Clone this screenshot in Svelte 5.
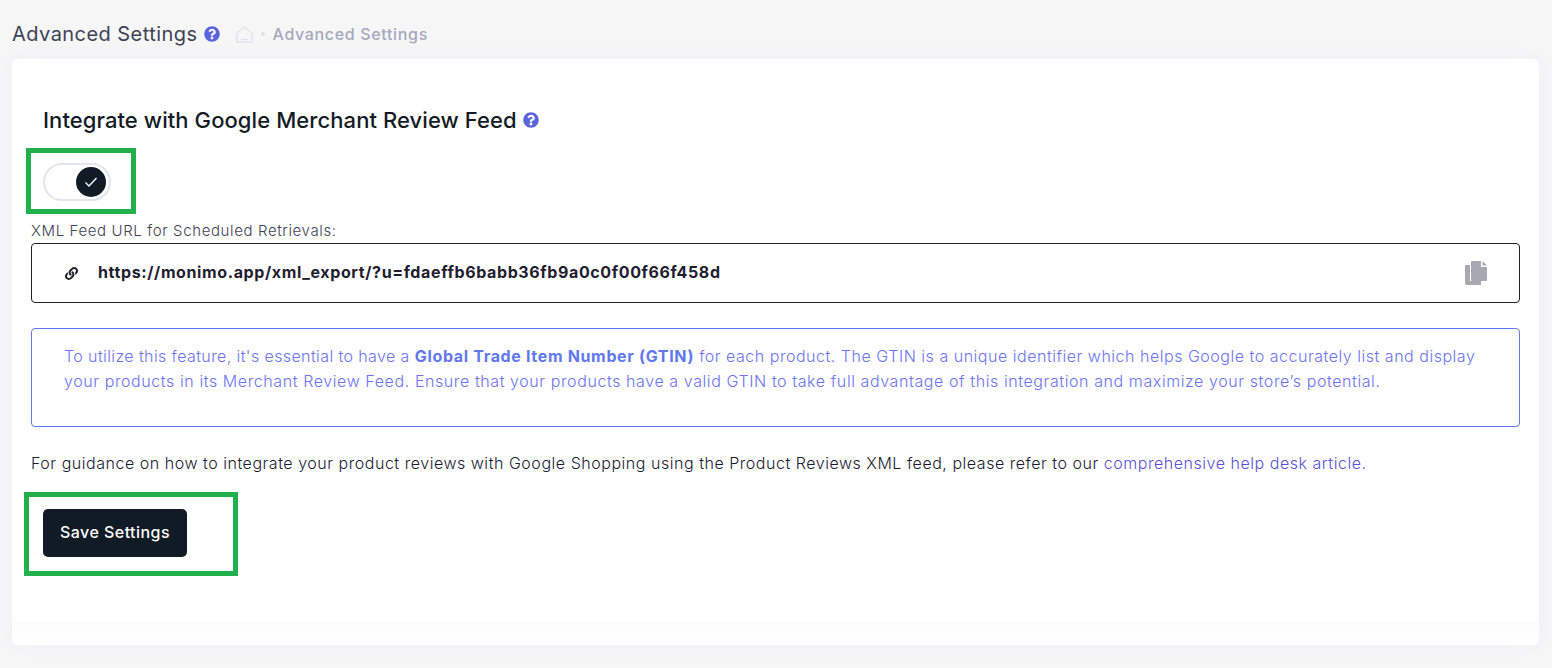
<script>
  const help = 'M504 256c0 136.997-111.043 248-248 248S8 392.997 8 256C8 119.083 119.043 8 256 8s248 111.083 248 248zM262.655 90c-54.497 0-89.255 22.957-116.549 63.758-3.536 5.286-2.353 12.415 2.715 16.258l34.699 26.31c5.205 3.947 12.621 3.008 16.665-2.122 17.864-22.658 30.113-35.797 57.303-35.797 20.429 0 45.698 13.148 45.698 32.958 0 14.976-12.363 22.667-32.534 33.976C247.128 238.528 216 254.941 216 296v4c0 6.627 5.373 12 12 12h56c6.627 0 12-5.373 12-12v-1.333c0-28.462 83.186-29.647 83.186-106.667 0-58.002-60.165-102-116.531-102zM256 338c-25.365 0-46 20.635-46 46 0 25.364 20.635 46 46 46s46-20.636 46-46c0-25.365-20.635-46-46-46z';
  const link = 'M326.612 185.391c59.747 59.809 58.927 155.698.36 214.59-.11.12-.24.25-.36.37l-67.2 67.2c-59.27 59.27-155.699 59.262-214.96 0-59.27-59.26-59.27-155.7 0-214.96l37.106-37.106c9.84-9.84 26.786-3.3 27.294 10.606.648 17.722 3.826 35.527 9.69 52.721 1.986 5.822.567 12.262-3.783 16.612l-13.087 13.087c-28.026 28.026-28.905 73.66-1.155 101.96 28.024 28.579 74.086 28.749 102.325.51l67.2-67.19c28.191-28.191 28.073-73.757 0-101.83-3.701-3.694-7.429-6.564-10.341-8.569a16.037 16.037 0 0 1-6.947-12.606c-.396-10.567 3.348-21.456 11.698-29.806l21.054-21.055c5.521-5.521 14.182-6.199 20.584-1.731a152.482 152.482 0 0 1 20.522 17.197zM467.547 44.449c-59.261-59.262-155.69-59.27-214.96 0l-67.2 67.2c-.12.12-.25.25-.36.37-58.566 58.892-59.387 154.781.36 214.59a152.454 152.454 0 0 0 20.521 17.196c6.402 4.468 15.064 3.789 20.584-1.731l21.054-21.055c8.35-8.35 12.094-19.239 11.698-29.806a16.037 16.037 0 0 0-6.947-12.606c-2.912-2.005-6.64-4.875-10.341-8.569-28.073-28.073-28.191-73.639 0-101.83l67.2-67.19c28.239-28.239 74.3-28.069 102.325.51 27.75 28.3 26.872 73.934-1.155 101.96l-13.087 13.087c-4.35 4.35-5.769 10.79-3.783 16.612 5.864 17.194 9.042 34.999 9.69 52.721.509 13.906 17.454 20.446 27.294 10.606l37.106-37.106c59.271-59.259 59.271-155.699.001-214.959z';
</script>

<div class="page">
  <header class="topbar">
    <h1>Advanced Settings</h1>
    <svg class="help" viewBox="0 0 512 512"><path d={help} /></svg>
    <svg class="home" viewBox="0 0 18 18" fill="none"><path d="M1 7.500 9 1l8 6.500V17H1z" /><path d="M5 14.500h8" /></svg>
    <span class="dot"></span>
    <span class="crumb">Advanced Settings</span>
  </header>

  <main class="card">
    <div class="body">
      <h2>Integrate with Google Merchant Review Feed <svg class="help" viewBox="0 0 512 512"><path d={help} /></svg></h2>

      <div class="mark mark-toggle">
        <div class="toggle">
          <span class="knob">
            <svg viewBox="0 0 14 14" fill="none"><path d="M1.500 7.500 5 11l7.500-8" /></svg>
          </span>
        </div>
      </div>

      <p class="label">XML Feed URL for Scheduled Retrievals:</p>
      <div class="url">
        <svg class="link" viewBox="0 0 512 512"><path d={link} /></svg>
        <span class="url-text">https://monimo.app/xml_export/?u=fdaeffb6babb36fb9a0c0f00f66f458d</span>
        <svg class="copy" viewBox="0 0 22 24">
          <path class="page-back" d="M0 4h5v16h11v4H2a2 2 0 0 1-2-2z" />
          <path class="page-front" d="M7 0h9v6h6v13a1 1 0 0 1-1 1H7a1 1 0 0 1-1-1V1a1 1 0 0 1 1-1z" />
          <path class="page-front" d="M17.500 0 22 4.500h-4.500z" />
        </svg>
      </div>

      <div class="info">
        <span class="lead">To utilize this feature, it's essential to have a</span> <b>Global Trade Item Number (GTIN)</b> for each product. The GTIN is a unique identifier which helps Google to accurately list and display<br />
        <span class="second">your products in its Merchant Review Feed. Ensure that your products have a valid GTIN to take full advantage of this integration and maximize your store’s potential.</span>
      </div>

      <p class="guide">For guidance on how to integrate your product reviews with Google Shopping using the Product Reviews XML feed, please refer to our <a href="#help">comprehensive help desk article.</a></p>

      <div class="mark mark-save">
        <button type="button">Save Settings</button>
      </div>
    </div>
    <div class="foot"></div>
  </main>
</div>

<style>
  :global(body) { background: #f6f6f7; }
  .page {
    height: 668px; box-sizing: border-box; padding: 0 13px 23px 12px;
    display: flex; flex-direction: column; overflow: hidden;
    font-family: Inter, "Liberation Sans", sans-serif;
  }
  .topbar { height: 59px; flex-shrink: 0; display: flex; align-items: center; padding-top: 9px; box-sizing: border-box; }
  h1 { margin: 0; font-size: 20px; font-weight: 400; color: #3f4254; letter-spacing: 0.45px; white-space: nowrap; }
  .help { width: 16px; height: 16px; fill: #5a64dc; flex-shrink: 0; }
  .topbar .help { margin-left: 6px; }
  .home { width: 17px; height: 17px; margin-left: 16px; stroke: #d5d7f0; stroke-width: 1; }
  .dot { width: 4px; height: 4px; border-radius: 50%; background: #dfe0ea; margin: 0 8px; }
  .crumb { font-size: 16px; font-weight: 500; color: #a5a8c0; letter-spacing: 0.66px; white-space: nowrap; }

  .card {
    flex: 1; display: flex; flex-direction: column;
    background: #fff; border-radius: 6px;
    box-shadow: 0 0 20px rgba(76, 87, 125, 0.04);
  }
  .body { flex: 1; padding: 46px 19px 0; box-sizing: border-box; }
  .foot { height: 24px; background: linear-gradient(#fbfbfc, #fff); border-radius: 0 0 6px 6px; }
  h2 {
    margin: 0 0 14px 12px; display: flex; align-items: center; gap: 6px;
    height: 29px; font-size: 22px; font-weight: 450; color: #141a24; white-space: nowrap;
    letter-spacing: 0.08px;
  }

  .mark { border: 5px solid #22b14c; box-sizing: border-box; background: #fff; }
  .mark-toggle { width: 110px; height: 66px; margin-left: -5px; padding: 10px 0 0 12px; }
  .toggle {
    width: 68px; height: 38px; box-sizing: border-box; border: 2px solid #e2e5ee; border-radius: 19px;
    display: flex; align-items: center; justify-content: flex-end; padding-right: 3px;
  }
  .knob { width: 30px; height: 30px; border-radius: 50%; background: #111b26; display: flex; align-items: center; justify-content: center; }
  .knob svg { width: 14px; height: 14px; stroke: #fff; stroke-width: 1.3; }

  .label { margin: 7px 0 0; height: 22px; line-height: 20px; font-size: 15px; font-weight: 300; color: #3f4254; letter-spacing: 0.62px; white-space: nowrap; }
  .url {
    height: 60px; box-sizing: border-box; border: 1px solid #1e2030; border-radius: 4px;
    display: flex; align-items: center; padding: 0 32px 0 33px;
  }
  .link { width: 13px; height: 13px; fill: #1e2030; flex-shrink: 0; }
  .url-text { margin-left: 20px; padding-bottom: 2px; font-size: 16px; font-weight: 700; color: #1e2030; flex: 1; letter-spacing: 0.62px; white-space: nowrap; }
  .copy { width: 22px; height: 24px; flex-shrink: 0; }
  .page-back, .page-front { fill: #a8a8b2; }

  .info {
    margin-top: 25px; height: 99px; box-sizing: border-box; border: 1px solid #5f78f0; border-radius: 4px;
    padding: 15px 32px 0; line-height: 25px; font-size: 16px; font-weight: 300; color: #6b74f6; white-space: nowrap;
    letter-spacing: 0.52px;
  }
  .lead { letter-spacing: 0.4px; }
  .second { letter-spacing: 0.59px; }
  .info b { font-weight: 700; color: #5f78f0; letter-spacing: 0.66px; }
  .guide { margin: 24px 0 0; height: 24px; line-height: 24px; font-size: 16px; font-weight: 300; color: #181c32; white-space: nowrap; letter-spacing: 0.53px; }
  .guide a { color: #5a50d8; text-decoration: none; }

  .mark-save { width: 214px; height: 84px; margin: 17px 0 0 -7px; padding: 12px 0 0 14px; }
  button {
    width: 144px; height: 48px; padding: 0 0 2px; border: none; border-radius: 5px; background: #111b26; color: #fff;
    font-family: inherit; font-size: 16px; font-weight: 500; letter-spacing: 0.45px; cursor: pointer; white-space: nowrap;
  }
</style>
